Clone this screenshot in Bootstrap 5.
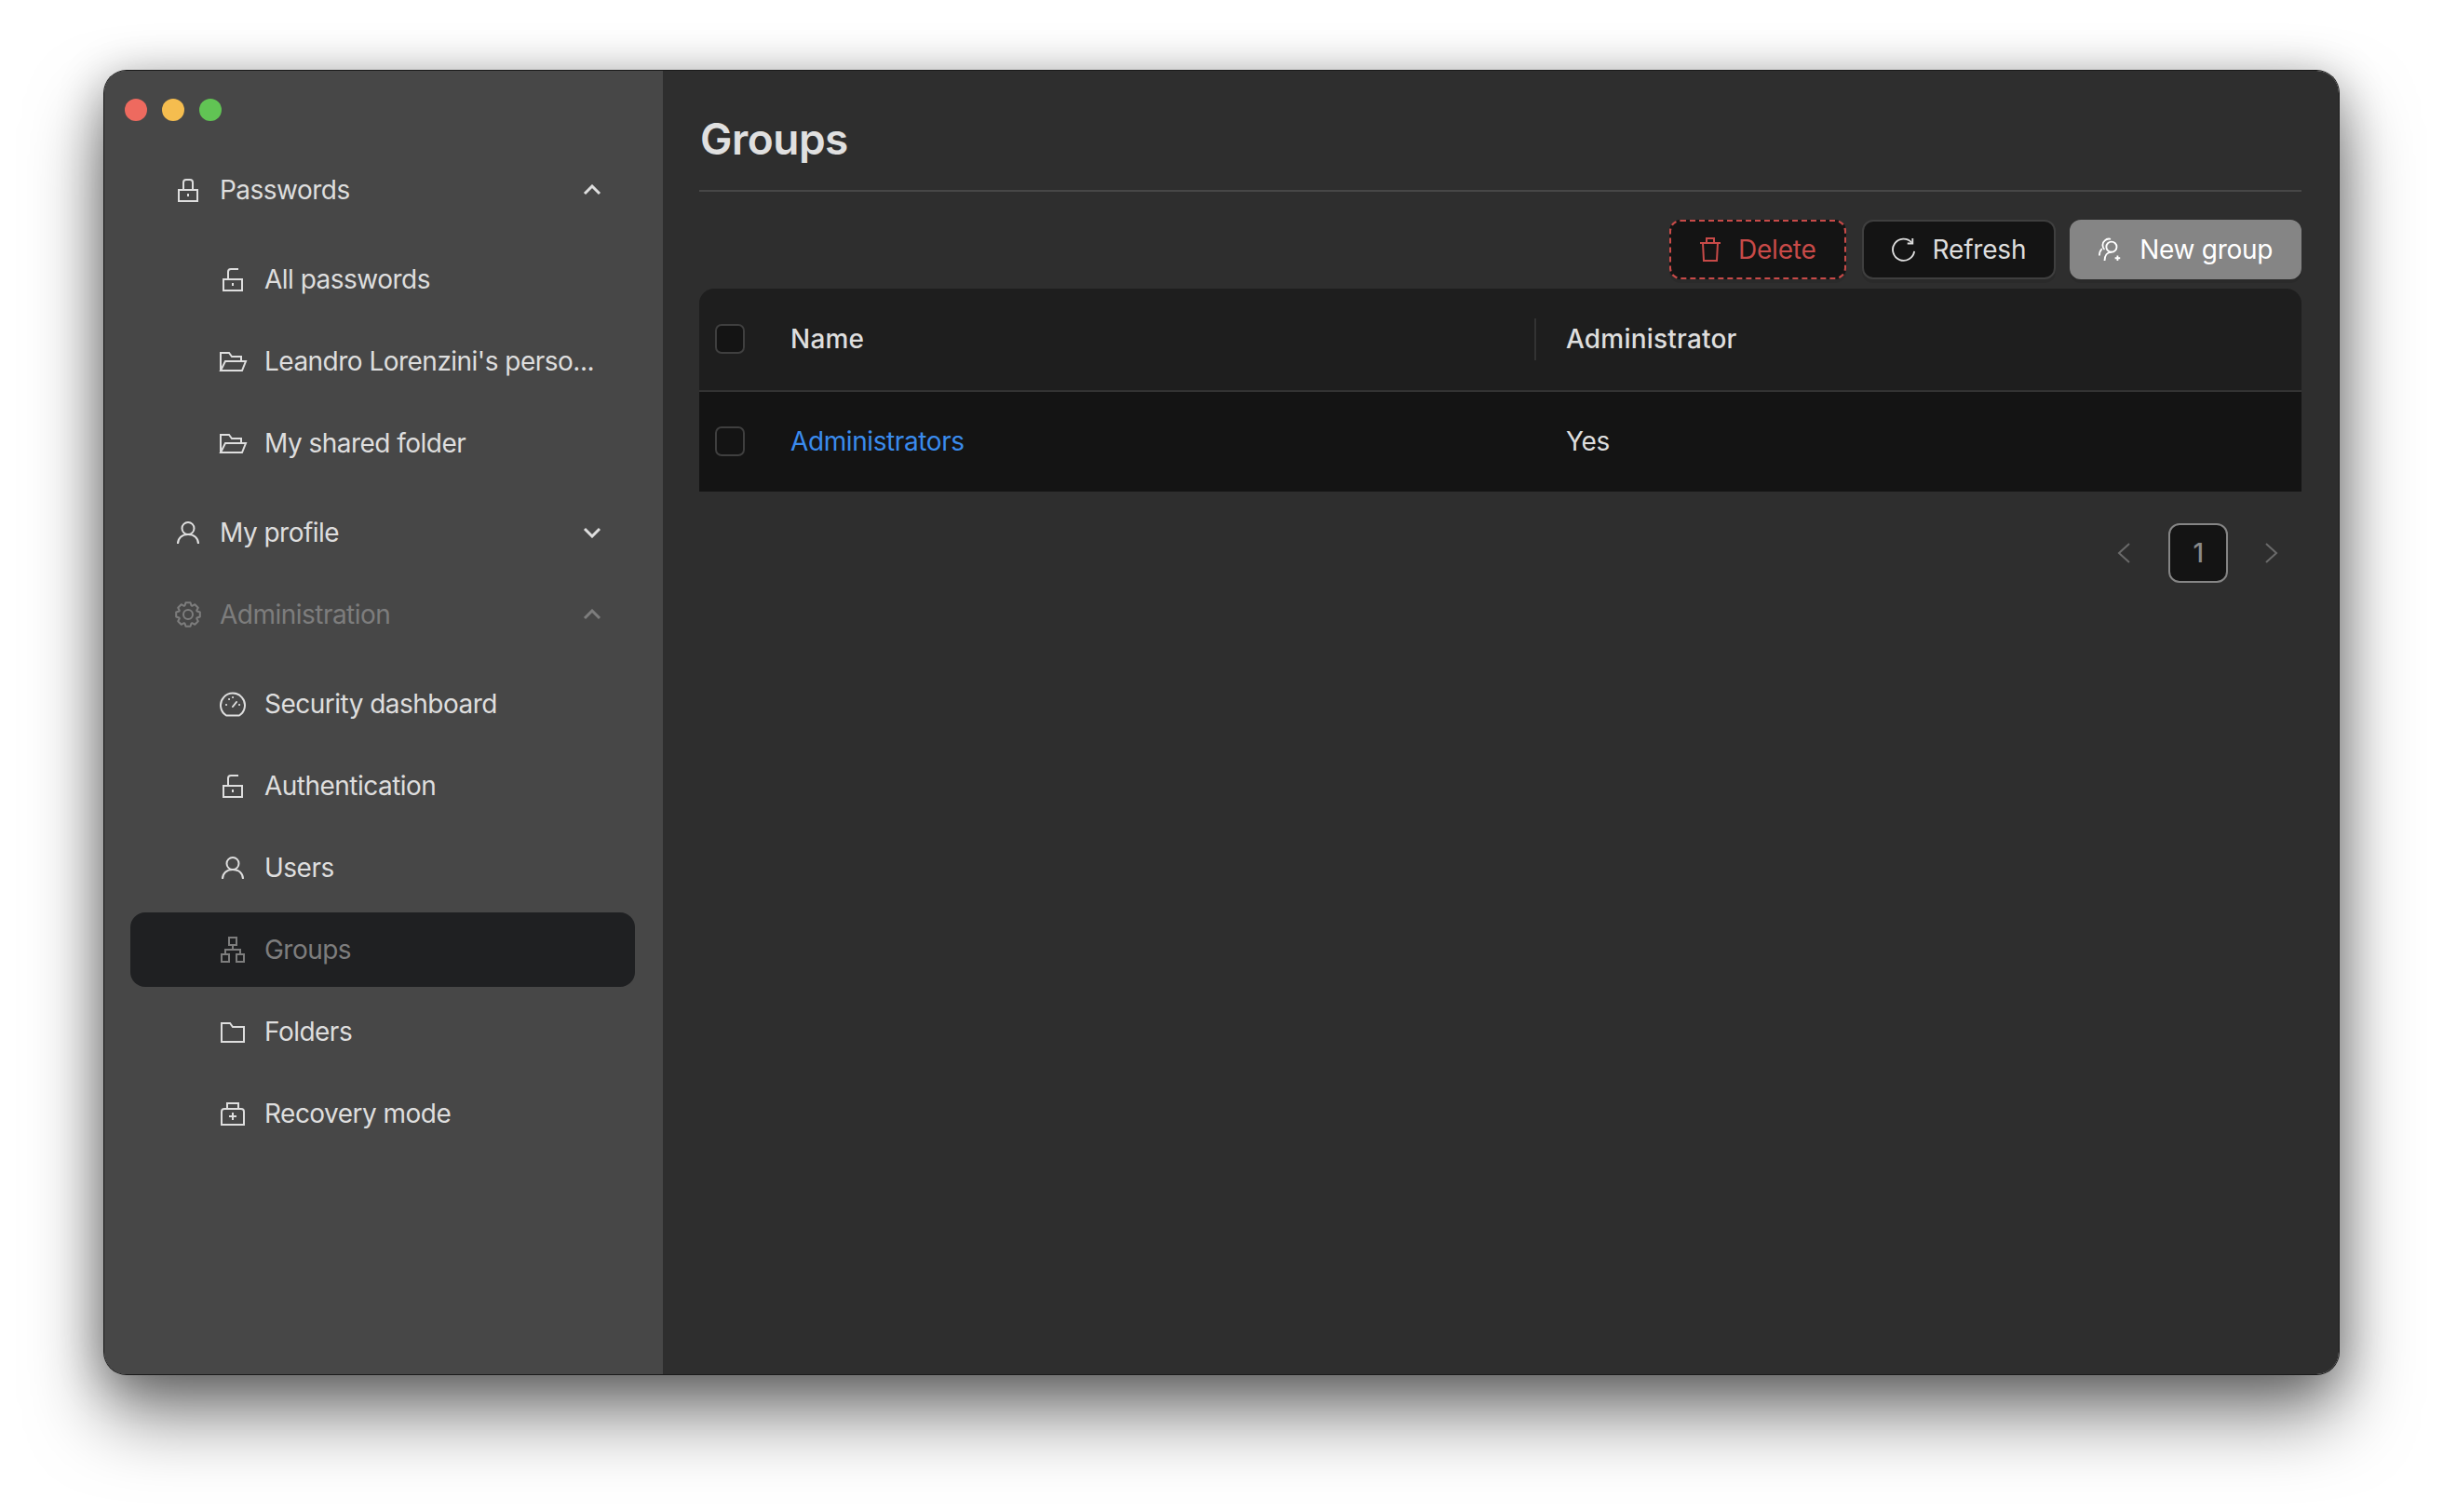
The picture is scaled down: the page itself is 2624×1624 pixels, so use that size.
<!DOCTYPE html>
<html lang="en">
<head>
    <meta charset="UTF-8">
    <title>Groups</title>
    <link href="https://cdn.jsdelivr.net/npm/bootstrap@5.3.0/dist/css/bootstrap.min.css" rel="stylesheet">
    <style>
        body { background: #fff; font-family: Inter, "Noto Sans", sans-serif; font-size: 28px; letter-spacing: -.4px; color: #dedede; padding: 76px 112px 0; min-height: 1624px; overflow: hidden; }
        .app-window { width: 2400px; height: 1400px; border-radius: 24px; overflow: hidden; background: #2e2e2e; }
        .window-wrap { border-radius: 24px; box-shadow: 0 0 0 1px #1a1a1a, 0 44px 80px rgba(0,0,0,.5), 0 8px 50px rgba(0,0,0,.32); }
        .side-panel { width: 600px; background: #474747; flex: none; padding: 0 30px 0 28px; }
        .traffic { height: 88px; margin-left: -6px; padding-top: 30px; gap: 16px; }
        .traffic span { width: 24px; height: 24px; border-radius: 50%; }
        .side-nav { gap: 8px; }
        .side-nav .sub-list { gap: 8px; margin: 8px 0; }
        .side-link { height: 80px; color: #dedede; padding: 0 40px 0 49px; border-radius: 16px; gap: 21px; font-size: 28px; letter-spacing: -.52px; line-height: 1; white-space: nowrap; }
        .sub-list .side-link { padding-left: 97px; gap: 21px; }
        .side-link:hover, .side-link:focus { color: #dedede; }
        .side-link.muted-link, .side-link.muted-link:hover { color: #7d7d7d; }
        .side-link.active-link, .side-link.active-link:hover { background: #1f2022; color: #7d7d7d; }
        .side-icon { width: 26px; height: 28px; flex: none; fill: none; stroke: currentColor; stroke-width: 2; overflow: visible; }
        .chev { width: 20px; height: 12px; flex: none; fill: none; stroke: currentColor; stroke-width: 3; margin-left: auto; margin-right: -4px; }
        .main-panel { padding: 0 40px 0 39px; }
        .page-title { font-size: 46px; font-weight: 600; line-height: 1; letter-spacing: -.5px; color: #e0e0e0; margin: 0; padding: 50px 0 32px 1px; border-bottom: 2px solid #474747; }
        .toolbar { margin-top: 30px; gap: 17px; height: 64px; }
        .tool-btn { height: 64px; background: #141414; border: 2px solid #3f3f3f; border-radius: 12px; color: #dedede; font-size: 28px; letter-spacing: -.2px; line-height: 1; padding: 0 30px; gap: 18px; box-shadow: 0 4px 0 rgba(0,0,0,.08); }
        .tool-btn:hover { background: #141414; color: #dedede; border-color: #3f3f3f; }
        .tool-btn svg { fill: none; stroke: currentColor; stroke-width: 2; flex: none; }
        .tool-btn.danger-btn, .tool-btn.danger-btn:hover { color: #c84a48; border: 2px dashed #c84a48; }
        .tool-btn.primary-btn, .tool-btn.primary-btn:hover { background: #858585; border-color: #858585; color: #fff; padding: 0 29px; margin-left: -2px; letter-spacing: -.3px; }
        .table-wrap { margin-top: 10px; border-radius: 16px 16px 0 0; overflow: hidden; }
        .group-table { table-layout: fixed; margin: 0; font-size: 28px; --bs-table-bg: transparent; --bs-table-color: #dedede; --bs-table-border-color: transparent; }
        .group-table th { background: #1e1e1e; height: 110px; font-weight: 500; letter-spacing: .2px; vertical-align: middle; padding: 0 32px 2px; border-bottom: 2px solid #333; color: #dedede; position: relative; }
        .group-table td { background: #141414; height: 108px; vertical-align: middle; padding: 0 32px 2px; border: 0; color: #dedede; }
        .group-table .check-col { width: 66px; padding: 0 0 2px 17px; }
        .group-table .name-col { width: 833px; }
        .group-table th.admin-col::before { content: ""; position: absolute; left: -2px; top: 32px; height: 45px; width: 2px; background: #333; }
        .group-check { display: block; width: 32px; height: 32px; margin: 0; background: #141414; border: 2px solid #3f3f3f; border-radius: 8px; }
        .group-link { color: #3a8bed; text-decoration: none; }
        .pager { margin: 34px 0 0; }
        .pager .page-link { background: transparent; border: 0; color: #6a6a6a; width: 64px; height: 64px; padding: 0; font-size: 28px; line-height: 60px; text-align: center; }
        .pager .page-item.current .page-link { background: #141414; border: 2px solid #858585; border-radius: 12px; color: #8a8a8a; font-weight: 500; margin: 0 16px; }
        .pager svg { fill: none; stroke: currentColor; stroke-width: 2; }
    </style>
</head>
<body>
<div class="window-wrap">
<div class="app-window d-flex">
    <aside class="side-panel">
        <div class="traffic d-flex">
            <span style="background:#ee6a5f"></span>
            <span style="background:#f5bd4f"></span>
            <span style="background:#61c454"></span>
        </div>
        <nav class="side-nav nav flex-column flex-nowrap">
            <a class="side-link nav-link d-flex align-items-center" href="#">
                <svg class="side-icon" viewBox="0 0 26 28"><path d="M3 14h20v12H3zM8 14V6a3 3 0 0 1 3-3h4a3 3 0 0 1 3 3v8M13 18v3"/></svg>
                <span>Passwords</span>
                <svg class="chev" viewBox="0 0 20 12"><path d="M2 10l8-8 8 8"/></svg>
            </a>
            <div class="sub-list nav flex-column flex-nowrap">
                <a class="side-link nav-link d-flex align-items-center" href="#">
                    <svg class="side-icon" viewBox="0 0 26 28"><path d="M3 14h20v12H3zM8 14V6a3 3 0 0 1 3-3h8M13 18v3"/></svg>
                    <span>All passwords</span>
                </a>
                <a class="side-link nav-link d-flex align-items-center" href="#">
                    <svg class="side-icon" viewBox="0 0 26 28"><path d="M0 24V5h9l3 4h10v5M0 24l5-10h22l-4 10z"/></svg>
                    <span>Leandro Lorenzini's perso...</span>
                </a>
                <a class="side-link nav-link d-flex align-items-center" href="#">
                    <svg class="side-icon" viewBox="0 0 26 28"><path d="M0 24V5h9l3 4h10v5M0 24l5-10h22l-4 10z"/></svg>
                    <span>My shared folder</span>
                </a>
            </div>
            <a class="side-link nav-link d-flex align-items-center" href="#">
                <svg class="side-icon" viewBox="0 0 26 28"><circle cx="13" cy="9.500" r="6.500"/><path d="M2 26c0-6 4.500-10 11-10s11 4 11 10"/></svg>
                <span>My profile</span>
                <svg class="chev" viewBox="0 0 20 12"><path d="M2 2l8 8 8-8"/></svg>
            </a>
            <a class="side-link nav-link muted-link d-flex align-items-center" href="#">
                <svg class="side-icon" viewBox="0 0 26 28"><circle cx="13" cy="14" r="5"/><path stroke-linejoin="round" d="M9.500 4.400L10.500 1.200H15.500L16.500 4.400L17.300 4.800L20.300 3.200L23.800 6.700L22.200 9.700L22.600 10.500L25.800 11.500V16.500L22.600 17.500L22.200 18.300L23.800 21.300L20.300 24.800L17.300 23.200L16.500 23.600L15.500 26.800H10.500L9.500 23.600L8.700 23.200L5.700 24.800L2.200 21.300L3.800 18.300L3.400 17.500L.2 16.500V11.500L3.400 10.500L3.800 9.700L2.200 6.700L5.700 3.200L8.700 4.800Z"/></svg>
                <span>Administration</span>
                <svg class="chev" viewBox="0 0 20 12"><path d="M2 10l8-8 8 8"/></svg>
            </a>
            <div class="sub-list nav flex-column flex-nowrap">
                <a class="side-link nav-link d-flex align-items-center" href="#">
                    <svg class="side-icon" viewBox="0 0 26 28"><path stroke-linejoin="round" d="M6 26.500A13 13 0 1 1 20 26.500ZM13 17l4-5M6 15h.1M9 9h.1M13 7h.1M20 15h.1" stroke-linecap="round"/></svg>
                    <span>Security dashboard</span>
                </a>
                <a class="side-link nav-link d-flex align-items-center" href="#">
                    <svg class="side-icon" viewBox="0 0 26 28"><path d="M3 14h20v12H3zM8 14V6a3 3 0 0 1 3-3h8M13 18v3"/></svg>
                    <span>Authentication</span>
                </a>
                <a class="side-link nav-link d-flex align-items-center" href="#">
                    <svg class="side-icon" viewBox="0 0 26 28"><circle cx="13" cy="9.500" r="6.500"/><path d="M2 26c0-6 4.500-10 11-10s11 4 11 10"/></svg>
                    <span>Users</span>
                </a>
                <a class="side-link nav-link active-link d-flex align-items-center" href="#">
                    <svg class="side-icon" viewBox="0 0 26 28"><path d="M9 1h8v8H9zM1 19h8v8H1zM17 19h8v8h-8zM13 9v5M5 19v-5h16v5"/></svg>
                    <span>Groups</span>
                </a>
                <a class="side-link nav-link d-flex align-items-center" href="#">
                    <svg class="side-icon" viewBox="0 0 26 28"><path d="M1 5h9l3 4h12v16H1z"/></svg>
                    <span>Folders</span>
                </a>
                <a class="side-link nav-link d-flex align-items-center" href="#">
                    <svg class="side-icon" viewBox="0 0 26 28"><path d="M1 26V12a3 3 0 0 1 3-3h18a3 3 0 0 1 3 3v14zM7 9V3h12v6M13 13v8M9 17h8"/></svg>
                    <span>Recovery mode</span>
                </a>
            </div>
        </nav>
    </aside>
    <main class="main-panel flex-grow-1">
        <h1 class="page-title">Groups</h1>
        <div class="toolbar d-flex justify-content-end">
            <button class="tool-btn danger-btn btn d-flex align-items-center">
                <svg width="24" height="28" viewBox="0 0 24 28"><path d="M1 7h22M8 7V2h8v5M4 7l1 19h14l1-19"/></svg>
                <span>Delete</span>
            </button>
            <button class="tool-btn btn d-flex align-items-center">
                <svg width="26" height="28" viewBox="0 0 28 28"><path d="M23 6A12.500 12.500 0 1 0 26 16"/><path d="M24 1v6h-6"/></svg>
                <span>Refresh</span>
            </button>
            <button class="tool-btn primary-btn btn d-flex align-items-center">
                <svg width="26" height="28" viewBox="0 0 28 28"><circle cx="15" cy="11" r="6"/><path d="M7 27c0-6 3-10 8-10M7 14c-3-2-3-8 0-10 2-2 4-3 7-2M1 21c0-3 1-6 3-8M22 21v6M19 24h6"/></svg>
                <span>New group</span>
            </button>
        </div>
        <div class="table-wrap">
            <table class="group-table table">
                <thead>
                    <tr>
                        <th class="check-col"><input class="group-check form-check-input" type="checkbox" aria-label="Select all"></th>
                        <th class="name-col">Name</th>
                        <th class="admin-col">Administrator</th>
                    </tr>
                </thead>
                <tbody>
                    <tr>
                        <td class="check-col"><input class="group-check form-check-input" type="checkbox" aria-label="Select"></td>
                        <td><a class="group-link" href="#">Administrators</a></td>
                        <td>Yes</td>
                    </tr>
                </tbody>
            </table>
        </div>
        <ul class="pager pagination justify-content-end">
            <li class="page-item"><a class="page-link d-flex align-items-center justify-content-center" href="#" aria-label="Previous"><svg width="14" height="22" viewBox="0 0 14 22"><path d="M13 1L2 11l11 10"/></svg></a></li>
            <li class="page-item current"><a class="page-link" href="#">1</a></li>
            <li class="page-item"><a class="page-link d-flex align-items-center justify-content-center" href="#" aria-label="Next"><svg width="14" height="22" viewBox="0 0 14 22"><path d="M1 1l11 10L1 21"/></svg></a></li>
        </ul>
    </main>
</div>
</div>
<script src="https://cdn.jsdelivr.net/npm/bootstrap@5.3.0/dist/js/bootstrap.bundle.min.js"></script>
</body>
</html>
